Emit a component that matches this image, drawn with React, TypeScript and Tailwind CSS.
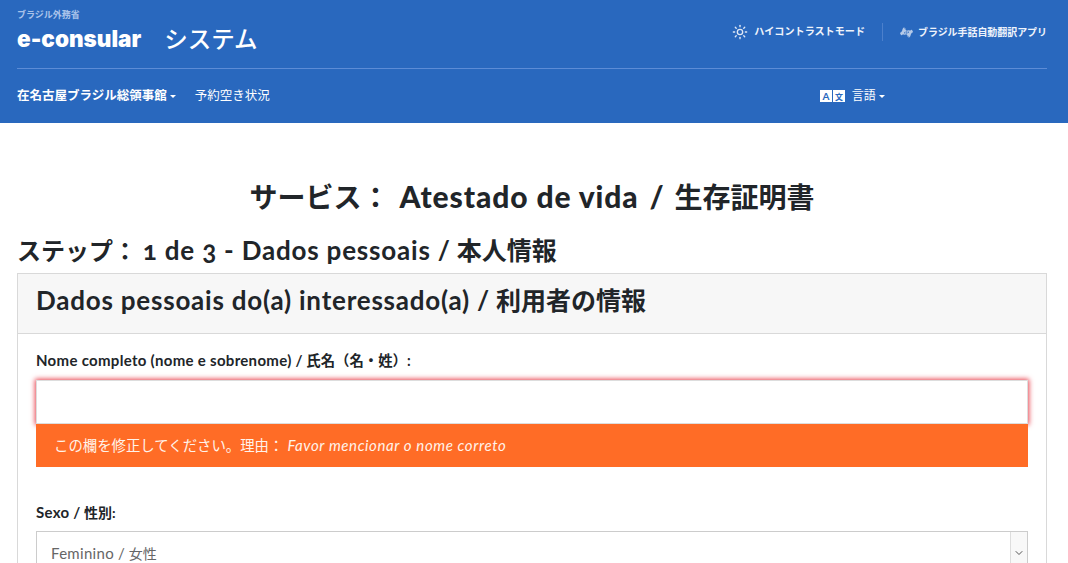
import { Sun, ChevronDown } from 'lucide-react'
import { FaAmericanSignLanguageInterpreting } from 'react-icons/fa'

const caret = 'inline-block ml-[3px] align-middle border-x-[3px] border-t-[3px] border-x-transparent border-t-white'

export default function App() {
  return (
    <div className="h-[563px] overflow-hidden bg-white text-[#212529] font-['Lato','Noto_Sans_CJK_JP',sans-serif]">
      <header className="h-[123px] bg-[#2968be] pl-[17px] pr-[21px] text-white">
        <div className="flex h-[69px] justify-between border-b border-[#5c8cd6]">
          <div className="pt-[9px]">
            <div className="text-[9px] leading-[12px] font-bold text-[#a9c3ea]">ブラジル外務省</div>
            <div className="mt-[2px] flex items-center text-[23.5px] leading-[32px]">
              <span className="font-['Inter','Noto_Sans_CJK_JP',sans-serif] text-[22.5px] font-black">e-consular</span>
              <span className="ml-[23px] font-medium">システム</span>
            </div>
          </div>
          <div className="mt-[23px] flex h-[18px] items-center text-[10.1px] font-bold text-[#eef3fb]">
            <Sun size={16} strokeWidth={2} className="mr-[6px] text-[#dfe8f6]" />
            <span>ハイコントラストモード</span>
            <div className="mx-[17px] h-[18px] w-px bg-[#4c80cc]" />
            <FaAmericanSignLanguageInterpreting size={13} className="mr-[5px] text-[#b4c9e8]" />
            <span className="text-[9.95px]">ブラジル手話自動翻訳アプリ</span>
          </div>
        </div>
        <nav className="flex h-[54px] items-center text-[12.5px]">
          <span className="font-bold">在名古屋ブラジル総領事館<i className={caret} /></span>
          <span className="ml-[19px]">予約空き状況</span>
          <div className="ml-[550px] flex items-center">
            <svg width="25" height="12" viewBox="0 0 25 12" className="mr-[7px]">
              <rect width="12" height="12" fill="#fff" />
              <rect x="13" width="12" height="12" fill="#fff" />
              <text x="6" y="10" textAnchor="middle" fontSize="10" fontWeight="700" fill="#2968be">A</text>
              <text x="19" y="9.5" textAnchor="middle" fontSize="8" fontWeight="700" fill="#2968be">文</text>
            </svg>
            <span className="text-[12px]">言語<i className={caret} /></span>
          </div>
        </nav>
      </header>
      <main className="pl-[17px] pr-[21px]">
        <h1 className="mt-[53px] text-center text-[28px] leading-[40px] font-bold">
          サービス： <span className="ml-[3px] text-[30px] font-black tracking-[0.9px]">Atestado de vida</span> <span className="mx-[4px] text-[30px] font-black">/</span> 生存証明書
        </h1>
        <h2 className="mt-[18px] text-[24px] leading-[30px] font-bold">
          ステップ： <span className="text-[25px]"><span className="text-[26px] tracking-[0.8px] oldstyle-nums">1 de 3 - Dados pessoais /</span> 本人情報</span>
        </h2>
        <section className="mt-[7px] border border-[#d9d9d9]">
          <div className="flex h-[60px] items-center border-b border-[#d9d9d9] bg-[#f7f7f7] px-[18px] pb-[6px] text-[25px] font-bold">
            <span className="text-[26px] tracking-[0.78px]">Dados pessoais do(a) interessado(a) /</span>&nbsp;利用者の情報
          </div>
          <div className="px-[18px] pt-[16px]">
            <label className="block text-[14.4px] leading-[20px] font-bold">
              <span className="text-[15px] tracking-[0.3px]">Nome completo (nome e sobrenome) /</span> 氏名（名・姓）:
            </label>
            <div className="mt-[9px] h-[44px] border border-[#ddd] bg-white shadow-[0_0_5px_1px_#e8434f]" />
            <div className="flex h-[43px] items-center bg-[#ff6c26] px-[18px] text-[14.4px] text-[#fff3ea]">
              この欄を修正してください。理由： <em className="ml-[4px] text-[15px] tracking-[0.6px]">Favor mencionar o nome correto</em>
            </div>
            <label className="mt-[35px] block text-[14px] leading-[20px] font-bold">
              <span className="text-[15px] tracking-[0.3px]">Sexo /</span> 性別:
            </label>
            <div className="mt-[8px] flex h-[45px] items-start border border-[#ccc]">
              <span className="flex-1 px-[14px] pt-[10px] text-[14px] text-[#666]">
                <span className="text-[15px] tracking-[0.3px]">Feminino /</span> 女性
              </span>
              <div className="flex h-full w-[17px] justify-center border-l border-[#ddd] bg-[#f8f8f8] pt-[15px]">
                <ChevronDown size={12} className="text-[#555]" />
              </div>
            </div>
          </div>
        </section>
      </main>
    </div>
  )
}
